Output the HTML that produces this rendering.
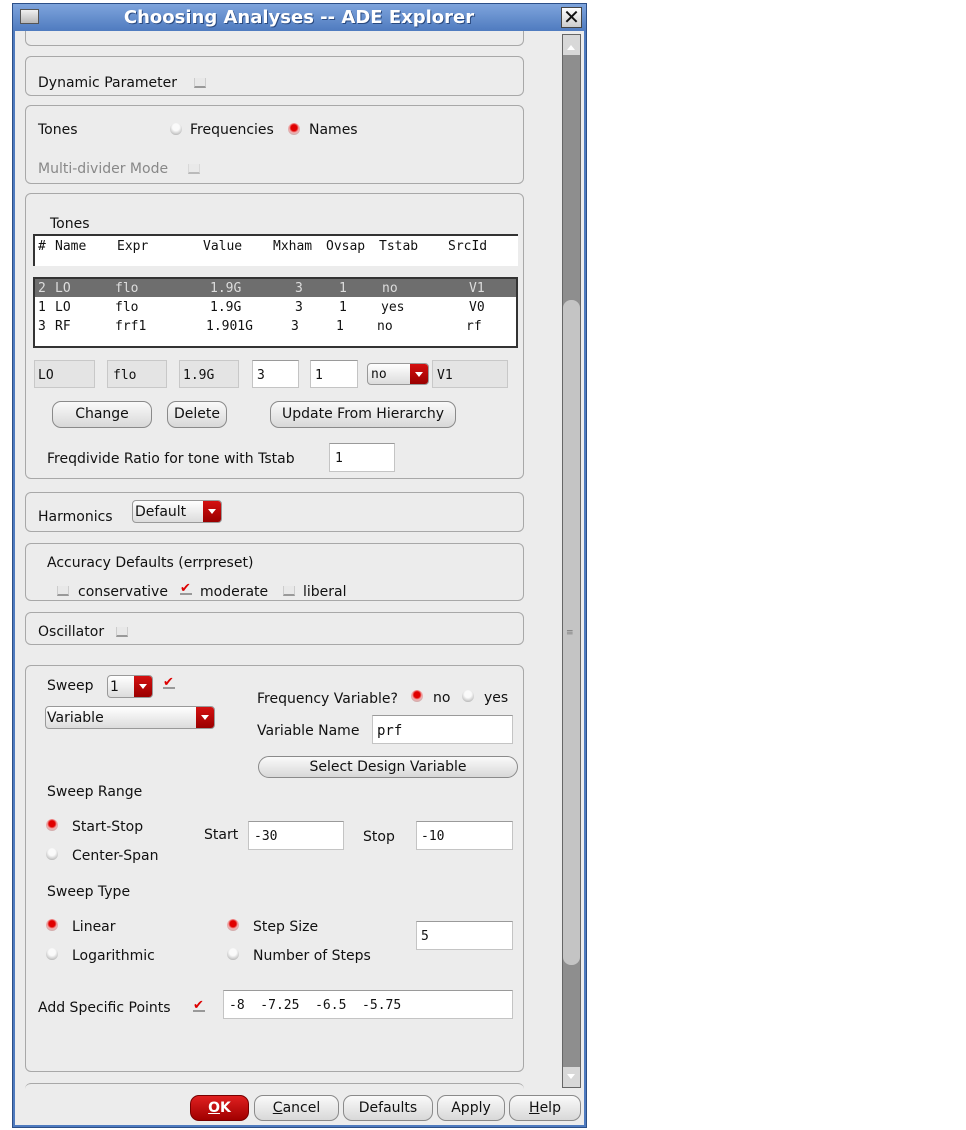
<!DOCTYPE html>
<html><head><meta charset="utf-8"><style>
body{margin:0;width:966px;height:1130px;background:#fff;position:relative;overflow:hidden;font-family:"DejaVu Sans","Liberation Sans",sans-serif;font-size:14px;color:#111}
div,span{position:absolute;box-sizing:border-box}
.t{white-space:nowrap;line-height:16px;margin-top:1px}
.m{font-family:"DejaVu Sans Mono","Liberation Mono",monospace;font-size:13px;white-space:pre;line-height:16px}
.p{border:1px solid #a8a8a8;border-radius:6px;left:25px;width:499px}
.f{background:#fff;border:1px solid #c4c4c4;border-top-color:#9a9a9a}
.g{background:#e4e4e4;border:1px solid #c8c8c8}
.cb{width:12px;height:10px;border-bottom:2px solid #999;border-left:1px solid #ccc;border-right:1px solid #ccc;background:#e8e8e8}
.ck{width:12px;height:12px;color:#d00;font-size:13px;line-height:12px;font-weight:bold;border-bottom:2px solid #999}
.r{width:12px;height:12px;border-radius:50%;background:radial-gradient(circle at 50% 35%,#fafafa 35%,#c8c8c8 70%,#888 100%)}
.r.on{background:radial-gradient(circle at 50% 40%,#e00000 32%,#f2b0b0 52%,#aaa 100%)}
.b{border:1px solid #8a8a8a;border-radius:9px;background:linear-gradient(#fafafa,#d8d8d8);text-align:center;line-height:25px;white-space:nowrap}
.cmb{border:1px solid #999;border-radius:4px;background:linear-gradient(#fff,#dcdcdc);line-height:20px;padding-left:2px;overflow:hidden}
.ar{position:absolute;right:0;top:0;bottom:0;width:18px;background:linear-gradient(#d41010,#9a0000)}
.ar:after{content:"";position:absolute;left:5px;top:8px;border:4px solid transparent;border-top:5px solid #fff}
</style></head><body>
<div style="left:12px;top:3px;width:575px;height:1125px;background:#4f7bbf;border:1px solid #2c4f88"></div>
<div style="left:15px;top:31px;width:569px;height:1094px;background:#ececec"></div>
<div style="left:25px;top:31px;width:499px;height:15px;border:1px solid #a8a8a8;border-top:none;border-radius:0 0 6px 6px"></div>
<div style="left:13px;top:4px;width:573px;height:27px;background:linear-gradient(#7ea4dc,#4f7bbf)"></div>
<div style="left:20px;top:9px;width:19px;height:15px;background:linear-gradient(#f0f0f0,#b8b8b8);border:1px solid #555"></div>
<div class="t" style="left:14px;width:570px;top:5px;text-align:center;color:#fff;font-weight:bold;font-size:18px;line-height:24px;text-shadow:1px 1px 0 #2a4a80">Choosing Analyses -- ADE Explorer</div>
<div style="left:561px;top:7px;width:21px;height:21px;background:linear-gradient(#fff,#ccc);border:1px solid #444;text-align:center;font-size:20px;line-height:19px;font-weight:bold">✕</div>
<div style="left:562px;top:34px;width:19px;height:1054px;background:#8e8e8e;border:1px solid #666"></div>
<div style="left:563px;top:35px;width:17px;height:20px;background:#d8d8d8"><span style="left:4px;top:6px;border:4px solid transparent;border-bottom:5px solid #fff"></span></div>
<div style="left:563px;top:300px;width:17px;height:665px;background:#c4c4c4;border-radius:8px"></div>
<div class="t" style="left:566px;top:624px;font-size:9px;color:#777">≡</div>
<div style="left:563px;top:1067px;width:17px;height:20px;background:#d8d8d8"><span style="left:4px;top:7px;border:4px solid transparent;border-top:5px solid #fff"></span></div>

<div class="p" style="top:56px;height:40px"></div>
<div class="t" style="left:38px;top:74px">Dynamic Parameter</div>
<div class="cb" style="left:194px;top:78px"></div>

<div class="p" style="top:105px;height:79px"></div>
<div class="t" style="left:38px;top:121px">Tones</div>
<div class="r" style="left:170px;top:123px"></div><div class="t" style="left:190px;top:121px">Frequencies</div>
<div class="r on" style="left:288px;top:123px"></div><div class="t" style="left:309px;top:121px">Names</div>
<div class="t" style="left:38px;top:160px;color:#888">Multi-divider Mode</div>
<div class="cb" style="left:188px;top:164px;opacity:.6"></div>

<div class="p" style="top:193px;height:286px"></div>
<div class="t" style="left:50px;top:215px">Tones</div>
<div style="left:33px;top:234px;width:485px;height:32px;background:#fff;border-top:2px solid #333;border-left:2px solid #333"></div>
<div class="m" style="left:38px;top:239px">#</div><div class="m" style="left:55px;top:239px">Name</div><div class="m" style="left:117px;top:239px">Expr</div><div class="m" style="left:203px;top:239px">Value</div><div class="m" style="left:273px;top:239px">Mxham</div><div class="m" style="left:326px;top:239px">Ovsap</div><div class="m" style="left:379px;top:239px">Tstab</div><div class="m" style="left:448px;top:239px">SrcId</div>
<div style="left:33px;top:277px;width:485px;height:71px;background:#fff;border:2px solid #333"></div>
<div style="left:35px;top:279px;width:481px;height:18px;background:#6e6e6e"></div>
<div style="left:0;top:281px;color:#ddd"><span class="m" style="left:38px">2</span><span class="m" style="left:55px">LO</span><span class="m" style="left:115px">flo</span><span class="m" style="left:210px">1.9G</span><span class="m" style="left:295px">3</span><span class="m" style="left:339px">1</span><span class="m" style="left:382px">no</span><span class="m" style="left:469px">V1</span></div>
<div style="left:0;top:300px"><span class="m" style="left:38px">1</span><span class="m" style="left:55px">LO</span><span class="m" style="left:115px">flo</span><span class="m" style="left:210px">1.9G</span><span class="m" style="left:295px">3</span><span class="m" style="left:339px">1</span><span class="m" style="left:381px">yes</span><span class="m" style="left:469px">V0</span></div>
<div style="left:0;top:319px"><span class="m" style="left:38px">3</span><span class="m" style="left:55px">RF</span><span class="m" style="left:115px">frf1</span><span class="m" style="left:206px">1.901G</span><span class="m" style="left:291px">3</span><span class="m" style="left:336px">1</span><span class="m" style="left:377px">no</span><span class="m" style="left:466px">rf</span></div>

<div class="g" style="left:34px;top:360px;width:61px;height:28px"></div><div class="m" style="left:38px;top:368px">LO</div>
<div class="g" style="left:107px;top:360px;width:60px;height:28px"></div><div class="m" style="left:113px;top:368px">flo</div>
<div class="g" style="left:179px;top:360px;width:60px;height:28px"></div><div class="m" style="left:183px;top:368px">1.9G</div>
<div class="f" style="left:252px;top:360px;width:47px;height:28px"></div><div class="m" style="left:257px;top:368px">3</div>
<div class="f" style="left:310px;top:360px;width:48px;height:28px"></div><div class="m" style="left:315px;top:368px">1</div>
<div class="cmb" style="left:367px;top:363px;width:62px;height:22px"><span class="m" style="left:3px;top:3px">no</span><span class="ar"></span></div>
<div class="g" style="left:432px;top:360px;width:76px;height:28px"></div><div class="m" style="left:437px;top:368px">V1</div>

<div class="b" style="left:52px;top:401px;width:100px;height:27px">Change</div>
<div class="b" style="left:167px;top:401px;width:60px;height:27px">Delete</div>
<div class="b" style="left:270px;top:401px;width:186px;height:27px">Update From Hierarchy</div>
<div class="t" style="left:47px;top:450px">Freqdivide Ratio for tone with Tstab</div>
<div class="f" style="left:329px;top:443px;width:66px;height:29px"></div><div class="m" style="left:335px;top:451px">1</div>

<div class="p" style="top:492px;height:40px"></div>
<div class="t" style="left:38px;top:508px">Harmonics</div>
<div class="cmb" style="left:132px;top:500px;width:90px;height:23px"><span class="t" style="left:2px;top:2px">Default</span><span class="ar"></span></div>

<div class="p" style="top:543px;height:58px"></div>
<div class="t" style="left:47px;top:554px">Accuracy Defaults (errpreset)</div>
<div class="cb" style="left:57px;top:586px"></div><div class="t" style="left:78px;top:583px">conservative</div>
<div class="ck" style="left:180px;top:583px">✔</div><div class="t" style="left:200px;top:583px">moderate</div>
<div class="cb" style="left:283px;top:586px"></div><div class="t" style="left:303px;top:583px">liberal</div>

<div class="p" style="top:612px;height:33px"></div>
<div class="t" style="left:38px;top:623px">Oscillator</div>
<div class="cb" style="left:116px;top:627px"></div>

<div class="p" style="top:665px;height:407px"></div>
<div class="t" style="left:47px;top:677px">Sweep</div>
<div class="cmb" style="left:107px;top:675px;width:46px;height:23px"><span class="t" style="left:2px;top:2px">1</span><span class="ar"></span></div>
<div class="ck" style="left:163px;top:677px">✔</div>
<div class="cmb" style="left:45px;top:706px;width:170px;height:23px"><span class="t" style="left:1px;top:2px">Variable</span><span class="ar"></span></div>
<div class="t" style="left:257px;top:690px">Frequency Variable?</div>
<div class="r on" style="left:411px;top:690px"></div><div class="t" style="left:433px;top:689px">no</div>
<div class="r" style="left:462px;top:690px"></div><div class="t" style="left:484px;top:689px">yes</div>
<div class="t" style="left:257px;top:722px">Variable Name</div>
<div class="f" style="left:372px;top:715px;width:141px;height:29px"></div><div class="m" style="left:377px;top:723px;font-size:14px">prf</div>
<div class="b" style="left:258px;top:756px;width:260px;height:22px;line-height:20px;border-radius:11px">Select Design Variable</div>
<div class="t" style="left:47px;top:783px">Sweep Range</div>
<div class="r on" style="left:46px;top:819px"></div><div class="t" style="left:72px;top:818px">Start-Stop</div>
<div class="r" style="left:46px;top:848px"></div><div class="t" style="left:72px;top:847px">Center-Span</div>
<div class="t" style="left:204px;top:826px">Start</div>
<div class="f" style="left:248px;top:821px;width:96px;height:29px"></div><div class="m" style="left:254px;top:829px">-30</div>
<div class="t" style="left:363px;top:828px">Stop</div>
<div class="f" style="left:416px;top:821px;width:97px;height:29px"></div><div class="m" style="left:421px;top:829px">-10</div>
<div class="t" style="left:47px;top:883px">Sweep Type</div>
<div class="r on" style="left:46px;top:919px"></div><div class="t" style="left:72px;top:918px">Linear</div>
<div class="r" style="left:46px;top:948px"></div><div class="t" style="left:72px;top:947px">Logarithmic</div>
<div class="r on" style="left:227px;top:919px"></div><div class="t" style="left:253px;top:918px">Step Size</div>
<div class="r" style="left:227px;top:948px"></div><div class="t" style="left:253px;top:947px">Number of Steps</div>
<div class="f" style="left:416px;top:921px;width:97px;height:29px"></div><div class="m" style="left:421px;top:929px">5</div>
<div class="t" style="left:38px;top:999px">Add Specific Points</div>
<div class="ck" style="left:193px;top:1000px">✔</div>
<div class="f" style="left:223px;top:990px;width:290px;height:29px"></div><div class="m" style="left:229px;top:998px">-8  -7.25  -6.5  -5.75</div>

<div style="left:25px;top:1083px;width:499px;height:10px;border-top:1px solid #a8a8a8;border-radius:6px 6px 0 0"></div>

<div class="b" style="left:190px;top:1095px;width:59px;height:26px;background:linear-gradient(#e02020,#a00000);color:#fff;font-weight:bold;border-color:#700"><u>O</u>K</div>
<div class="b" style="left:254px;top:1095px;width:85px;height:26px"><u>C</u>ancel</div>
<div class="b" style="left:343px;top:1095px;width:90px;height:26px">Defaults</div>
<div class="b" style="left:437px;top:1095px;width:68px;height:26px">Apply</div>
<div class="b" style="left:509px;top:1095px;width:72px;height:26px"><u>H</u>elp</div>
</body></html>
